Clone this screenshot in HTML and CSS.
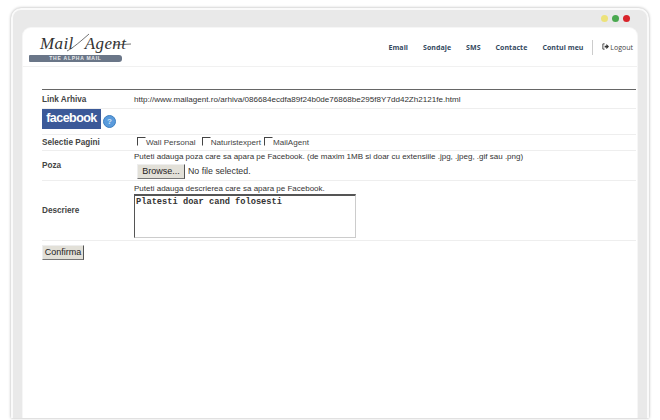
FILE: index.html
```html
<!DOCTYPE html>
<html>
<head>
<meta charset="utf-8">
<link rel="stylesheet" href="styles.css">
<title>MailAgent</title>
</head>
<body>
<div class="window">
  <div class="dots"><i class="dot yellow"></i><i class="dot green"></i><i class="dot red"></i></div>
  <div class="panel">
    <header class="header">
      <div class="logo">
        <svg class="swoosh" width="104" height="26" viewBox="0 0 104 26"><path d="M38 19C44 16 52 9 60 2M84 13L102 12" fill="none" stroke="#333" stroke-width=".7"/></svg>
        <div class="logo-script"><span class="logo-word">Mail</span><span class="logo-word">Agent</span></div>
        <div class="logo-bar">THE ALPHA MAIL</div>
      </div>
      <nav class="nav">
        <a>Email</a><a>Sondaje</a><a>SMS</a><a>Contacte</a><a>Contul meu</a>
        <span class="logout"><svg width="7" height="7" viewBox="0 0 8 8"><path d="M3 1H1V7H3" fill="none" stroke="#333"/><path d="M3 3H5V1L8 4L5 7V5H3Z" fill="#333"/></svg> Logout</span>
      </nav>
    </header>
    <main class="content">
      <div class="row row-link">
        <div class="label">Link Arhiva</div>
        <div class="value url">http://www.mailagent.ro/arhiva/086684ecdfa89f24b0de76868be295f8Y7dd42Zh2121fe.html</div>
      </div>
      <div class="row row-fb">
        <div class="fb">facebook</div>
        <div class="help">?</div>
      </div>
      <div class="row row-pages">
        <div class="label">Selectie Pagini</div>
        <div class="value checks">
          <span class="check"><i class="box"></i>Wall Personal</span>
          <span class="check"><i class="box"></i>Naturistexpert</span>
          <span class="check"><i class="box"></i>MailAgent</span>
        </div>
      </div>
      <div class="row row-photo">
        <div class="label">Poza</div>
        <div class="value">
          <div class="hint">Puteti adauga poza care sa apara pe Facebook. (de maxim 1MB si doar cu extensiile .jpg, .jpeg, .gif sau .png)</div>
          <div class="file"><span class="btn browse">Browse...</span><span class="nofile">No file selected.</span></div>
        </div>
      </div>
      <div class="row row-desc">
        <div class="label">Descriere</div>
        <div class="value">
          <div class="hint">Puteti adauga descrierea care sa apara pe Facebook.</div>
          <div class="textarea">Platesti doar cand folosesti</div>
        </div>
      </div>
      <div class="submit"><span class="btn confirm">Confirma</span></div>
    </main>
  </div>
</div>
</body>
</html>
```

FILE: styles.css
```css
* { box-sizing: border-box; }
html, body { margin: 0; height: 420px; overflow: hidden; background: #fff; }
body { padding: 8px 11px 0; font-family: "Liberation Sans", Arial, sans-serif; color: #333; }
.window {
  width: 638px; height: 410px; padding: 0 10px 0 10px; overflow: hidden;
  background: #e9e9e9; border: 2px solid #fafafa; border-bottom: 0; border-radius: 10px 10px 0 0;
  box-shadow: 0 0 3px #aaa;
}
.dots { height: 18px; display: flex; justify-content: flex-end; align-items: center; gap: 4px; padding: 0 7px 2px 0; }
.dot { width: 7px; height: 7px; border-radius: 50%; display: block; }
.yellow { background: #ece27a; }
.green { background: #4aa84f; }
.red { background: #d8232a; }
.panel { height: 392px; background: #fff; border-radius: 8px 8px 0 0; box-shadow: 0 0 0 1px #f6f6f6; }
.header { height: 39px; display: flex; justify-content: space-between; align-items: flex-start; border-bottom: 1px solid #f1f1f1; padding: 0 4px 0 6px; }
.logo { position: relative; width: 104px; height: 34px; margin-top: 4px; }
.swoosh { position: absolute; left: 0; top: 0; }
.logo-script { display: flex; gap: 11px; height: 23px; padding-left: 11px; font: italic 17px/24px "Liberation Serif", serif; color: #333; letter-spacing: .4px; white-space: nowrap; }
.logo-word { display: block; }
.logo-bar { width: 93px; height: 7px; background: #6a7688; border-radius: 1px 3px 3px 1px; color: #e8e8e8; font: bold 5px/7px "Liberation Sans", sans-serif; text-align: center; letter-spacing: .75px; }
.nav { display: flex; align-items: center; height: 38px; font: bold 7px/15px "Open Sans", sans-serif; color: #34495e; }
.nav a { margin-right: 15px; white-space: nowrap; letter-spacing: .05px; }
.logout { border-left: 1px solid #ccc; margin-left: -7px; padding-left: 9px; font-weight: 400; font-size: 7px; color: #444; white-space: nowrap; }
.content { padding: 22px 1px 0 19px; }
.row { display: flex; align-items: center; border-bottom: 1px solid #eee; font-size: 8.2px; }
.row-link { height: 20px; border-top: 1px solid #666; }
.row-fb { height: 26px; align-items: flex-start; }
.row-pages { height: 16px; }
.row-photo { height: 30px; }
.row-desc { height: 60px; }
.label { width: 92px; font-weight: bold; color: #444; white-space: nowrap; }
.value { color: #333; white-space: nowrap; }
.url { font-size: 8.08px; }
.fb { width: 59px; height: 20px; background: #3b5998; color: #fff; font: bold 12.5px/19px "Liberation Sans", sans-serif; text-align: center; letter-spacing: -.55px; }
.help { width: 13px; height: 13px; margin: 6px 0 0 2px; border-radius: 50%; background: #5a9bdc; border: 1px solid #3d7fc0; color: #cfe3f7; font: bold 8px/11px "Liberation Sans", sans-serif; text-align: center; }
.checks { display: flex; gap: 6px; padding-left: 3px; font-size: 8.1px; }
.check { display: flex; align-items: center; color: #444; }
.check:last-child { margin-left: -3px; }
.box { width: 9px; height: 9px; border: 1px solid #fff; border-top-color: #444; border-left-color: #444; display: block; margin-bottom: 2px; }
.hint { line-height: 10px; font-size: 8px; color: #333; }
.file { display: flex; align-items: center; height: 16px; margin-top: 1px; padding-left: 3px; }
.btn { display: block; background: #e2e0d8; border: 1px solid; border-color: #eee #555 #777 #eee; color: #222; font-size: 9px; text-align: center; }
.browse { width: 48px; height: 15px; line-height: 13px; }
.nofile { font-size: 8.8px; padding-left: 3px; color: #333; }
.textarea { width: 222px; height: 44px; border: 1px solid #ccc; border-top: 2px solid #555; border-left-color: #555; font: bold 8.7px/10px "Liberation Mono", monospace; color: #333; padding: 1px; }
.submit { padding-top: 4px; }
.confirm { width: 42px; height: 15px; line-height: 13px; }
```
